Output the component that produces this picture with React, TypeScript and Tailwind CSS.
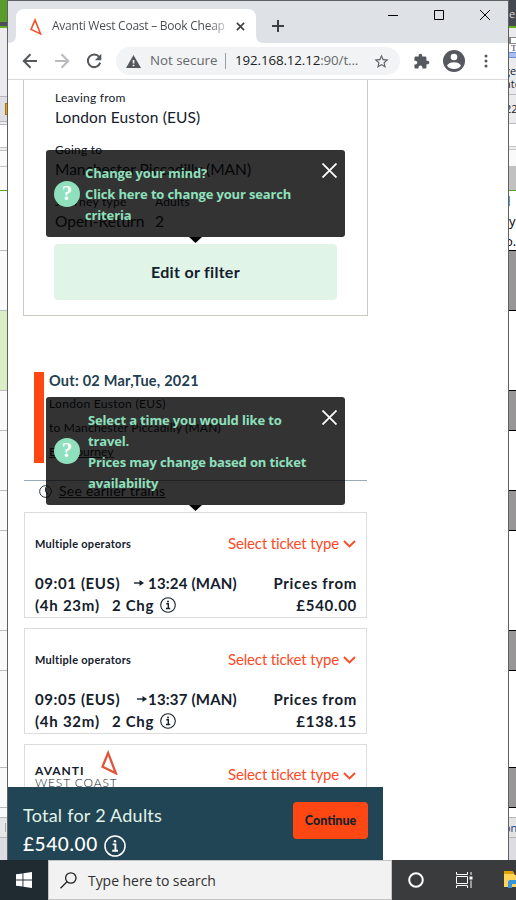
import React from "react";

type Band = { cls: string; text?: React.ReactNode };

const leftBands: Band[] = [
  { cls: "h-[22px] bg-[#599c2b]" },
  { cls: "h-[4px] bg-[#4b4f5a]" },
  { cls: "h-[2px] bg-[#63ad1f]" },
  { cls: "h-[68px] bg-[#ebebee]" },
  { cls: "h-[26px] border-y border-[#b9b9be] bg-[#dedee4] pt-[6px] pl-[5px]", text: <div className="h-[12px] w-[4px] border border-[#a87408] bg-[#eda412]" /> },
  { cls: "h-[3px] border-b border-[#b9b9be] bg-[#ebebee]" },
  { cls: "h-[22px] bg-white" },
  { cls: "h-[4px] border-y border-[#c4c4c4] bg-[#eeeeee]" },
  { cls: "h-[16px] border-b border-[#c4c4c4] bg-[#fafafa]" },
  { cls: "h-[24px] border-b border-[#55a520] bg-[#fafafa]" },
  { cls: "h-[60px] border-b border-[#bdbdbd] bg-[#fafafa]" },
  { cls: "h-[60px] border-b border-[#bdbdbd] bg-[#fafafa]" },
  { cls: "h-[80px] border-b border-[#bdbdbd] bg-[#d9eec4]" },
  { cls: "h-[40px] border-b border-[#bdbdbd] bg-[#fafafa]" },
  { cls: "h-[60px] border-b border-[#bdbdbd] bg-[#fafafa]" },
  { cls: "h-[40px] border-b border-[#bdbdbd] bg-[#fafafa]" },
  { cls: "h-[100px] border-b border-[#bdbdbd] bg-[#fafafa]" },
  { cls: "h-[40px] border-b border-[#bdbdbd] bg-[#fafafa]" },
  { cls: "h-[97px] border-b border-[#bdbdbd] bg-[#fafafa]" },
  { cls: "h-[40px] border-b border-[#bdbdbd] bg-[#fafafa]" },
  { cls: "h-[10px] border-b border-[#bdbdbd] bg-[#fafafa]" },
  { cls: "h-[20px] border-b border-[#b5b5b5] bg-[#e6e6e6] pt-[5px] pl-[5px]", text: <div className="h-[9px] w-px bg-[#aaaaaa]" /> },
  { cls: "h-[22px] bg-[#dcdce2]" },
];

const rightBands: Band[] = [
  { cls: "h-[26px] bg-[#454951] text-[#d5d5d5] text-[11px] leading-[28px]", text: "e" },
  { cls: "h-[2px] bg-[#63b01f]" },
  { cls: "h-[10px] border-b border-[#888888] bg-[#ebebee]" },
  { cls: "h-[6px] border-b border-l-2 border-[#888888] bg-white" },
  { cls: "h-[8px] bg-white font-['Liberation_Serif',serif] text-[9px] leading-[9px] text-[#333355] pl-[2px]", text: "T" },
  { cls: "h-[6px] border-y border-[#6f8ed6] bg-[#a8bdf0]" },
  { cls: "h-[37px] border-b border-[#b9b9be] bg-[#ebebee] pt-[6px] text-[11px] leading-[13px] text-[#222222]", text: <div className="-ml-[5px]"><div>ge</div><div>nte</div></div> },
  { cls: "h-[29px] border-b border-[#b9b9be] bg-[#ebebee] text-[11px] leading-[28px] text-[#222222]", text: <div className="-ml-[4px]">22</div> },
  { cls: "h-[22px] bg-white" },
  { cls: "h-[4px] border-y border-[#c4c4c4] bg-[#eeeeee]" },
  { cls: "h-[16px] bg-[#fafafa]" },
  { cls: "h-[25px] border-b border-[#55a520] bg-[#c1c1c1]" },
  { cls: "h-[20px] bg-white pt-[5px]", text: <div className="h-[10px] w-px bg-[#5798d6]" /> },
  { cls: "h-[39px] bg-white text-[13px] leading-[20px] text-black", text: <div><div>y</div><div className="-ml-[4px]">o.</div></div> },
  { cls: "h-[61px] border-y border-black bg-[#989696]" },
  { cls: "h-[79px] bg-white" },
  { cls: "h-[41px] border-y border-black bg-[#989696]" },
  { cls: "h-[59px] bg-white" },
  { cls: "h-[41px] border-y border-black bg-[#989696]" },
  { cls: "h-[99px] bg-white" },
  { cls: "h-[41px] border-y border-black bg-[#989696]" },
  { cls: "h-[96px] bg-white" },
  { cls: "h-[41px] border-y border-black bg-[#989696]" },
  { cls: "h-[9px] bg-white" },
  { cls: "h-[21px] border-y border-[#b5b5b5] bg-[#e3e3e3] text-[11px] leading-[20px] text-[#24407c]", text: <div className="-ml-[5px]">on</div> },
  { cls: "h-[22px] bg-[#dcdce2]" },
];

function Strip({ bands }: { bands: Band[] }) {
  return (
    <div className="h-[860px] w-[7px] shrink-0 overflow-hidden">
      {bands.map((b, i) => (
        <div key={i} className={`overflow-hidden whitespace-nowrap ${b.cls}`}>
          {b.text}
        </div>
      ))}
    </div>
  );
}

function AvantiMark({ className, color }: { className: string; color: string }) {
  return (
    <svg viewBox="0 0 16 25" className={className} fill="none" stroke={color} strokeWidth="2.2" preserveAspectRatio="none">
      <path d="M6.7 3 L14 23.3 L1.4 16.7 Z" />
    </svg>
  );
}

function TabStrip() {
  return (
    <div className="flex h-[42px] bg-[#dee1e6] pt-2">
      <div className="relative ml-2 flex h-[34px] w-[240px] items-center rounded-t-lg bg-white">
        <svg viewBox="0 0 256 8" className="absolute -left-2 bottom-0 h-2 w-[256px] fill-white">
          <path d="M0 8 Q8 8 8 0 V8Z M256 8 Q248 8 248 0 V8Z" />
        </svg>
        <AvantiMark color="#f1512a" className="ml-[14px] h-[17px] w-[12px]" />
        <div className="ml-[10px] w-[173px] overflow-hidden whitespace-nowrap bg-gradient-to-r from-[#45484c] from-90% to-[#c8c8c8] bg-clip-text text-[12px] tracking-[-0.24px] text-transparent">
          Avanti West Coast – Book Cheap
        </div>
        <svg viewBox="0 0 10 10" className="ml-[11px] h-[9px] w-[9px]" stroke="#3c4043" strokeWidth="1.8">
          <path d="M1 1L9 9M9 1L1 9" />
        </svg>
      </div>
      <svg viewBox="0 0 12 12" className="mt-[11px] ml-4 h-3 w-3" stroke="#3c4043" strokeWidth="2">
        <path d="M6 0V12M0 6H12" />
      </svg>
      <div className="mt-px ml-[104px] flex h-[10px] gap-[36px]">
        <svg viewBox="0 0 10 10" className="h-[10px] w-[10px]"><path d="M0 5.5H10" stroke="#000" /></svg>
        <svg viewBox="0 0 10 10" className="h-[10px] w-[10px]"><path d="M.5 .5H9.5V9.5H.5Z" stroke="#000" fill="none" /></svg>
        <svg viewBox="0 0 10 10" className="h-[10px] w-[10px]"><path d="M0 0L10 10M10 0L0 10" stroke="#000" /></svg>
      </div>
    </div>
  );
}

function Toolbar() {
  return (
    <div className="flex h-[37px] items-center border-b border-[#d9dadc] bg-white pl-[14px]">
      <svg viewBox="0 0 16 16" className="h-4 w-4" fill="none" stroke="#55585d" strokeWidth="2"><path d="M15 8H2M8.5 1.3L1.8 8l6.700 6.700" /></svg>
      <svg viewBox="0 0 16 16" className="ml-4 h-4 w-4" fill="none" stroke="#b9babd" strokeWidth="2"><path d="M1 8H14M7.500 1.300L14.200 8l-6.700 6.700" /></svg>
      <svg viewBox="0 0 16 16" className="ml-4 h-4 w-4"><path d="M13.200 4A6.300 6.300 0 1 0 14.200 9.600" fill="none" stroke="#55585d" strokeWidth="2" /><path d="M15.300 .7V7.200H8.800Z" fill="#55585d" /></svg>
      <div className="ml-[14px] flex h-7 w-[284px] items-center rounded-full bg-[#f1f3f4] pl-[10px]">
        <svg viewBox="0 0 15 13" className="h-[13px] w-[15px]"><path d="M7.500 0L15 13H0Z" fill="#54575b" /><path d="M6.700 5h1.700v3.500H6.700ZM6.700 9.700h1.700v1.600H6.700Z" fill="#f1f3f4" /></svg>
        <span className="ml-[9px] w-[67px] whitespace-nowrap text-[13.300px] text-[#65686c]">Not secure</span>
        <div className="ml-[8px] h-4 w-px bg-[#9a9da1]" />
        <span className="ml-[9px] w-[125px] whitespace-nowrap text-[13.300px] tracking-[-0.1px] text-[#202124]">192.168.12.12<span className="text-[#65686c]">:90/t...</span></span>
        <svg viewBox="0 0 24 24" className="ml-[13px] h-[17px] w-[17px]"><path fill="#5f6368" d="M22 9.240l-7.190-.620L12 2 9.190 8.630 2 9.240l5.460 4.730L5.820 21 12 17.270 18.180 21l-1.630-7.030L22 9.240zM12 15.400l-3.760 2.270 1-4.280-3.320-2.880 4.380-.380L12 6.100l1.710 4.040 4.380.380-3.320 2.880 1 4.280L12 15.400z" /></svg>
      </div>
      <svg viewBox="0 0 24 24" className="ml-[13px] h-[17px] w-[17px]" fill="#55585d"><path d="M20.500 11H19V7c0-1.100-.9-2-2-2h-4V3.500C13 2.120 11.880 1 10.500 1S8 2.120 8 3.500V5H4c-1.100 0-1.990.9-1.990 2v3.800H3.500c1.490 0 2.700 1.210 2.700 2.700s-1.210 2.700-2.700 2.700H2V20c0 1.100.9 2 2 2h3.800v-1.500c0-1.490 1.210-2.700 2.700-2.700s2.700 1.210 2.700 2.700V22H17c1.100 0 2-.9 2-2v-4h1.500c1.380 0 2.500-1.120 2.500-2.500S21.880 11 20.500 11z" /></svg>
      <svg viewBox="0 0 22 22" className="ml-[13px] h-[22px] w-[22px]"><circle cx="11" cy="11" r="11" fill="#55585d" /><circle cx="11" cy="7" r="3.300" fill="#fff" /><path d="M4 15.700Q6 12.300 11 12.300T18 15.700Q15.500 19 11 19T4 15.700Z" fill="#fff" /></svg>
      <svg viewBox="0 0 4 14" className="ml-[19px] h-[14px] w-1" fill="#55585d"><circle cx="2" cy="2" r="1.500" /><circle cx="2" cy="7" r="1.500" /><circle cx="2" cy="12" r="1.500" /></svg>
    </div>
  );
}

function Tooltip({ className, textClass, children }: { className: string; textClass: string; children: React.ReactNode }) {
  return (
    <div className={`absolute left-[38px] flex w-[299px] items-center rounded-[3px] bg-black/80 pl-2 ${className}`}>
      <div className="flex h-[26px] w-[26px] shrink-0 items-center justify-center rounded-full bg-[#8fe0bd] font-['Liberation_Serif',serif] text-[21px] font-bold text-white">?</div>
      <div className={`w-[224px] pt-[2px] whitespace-nowrap font-['Open_Sans','Noto_Sans',sans-serif] text-[13px] leading-[21px] font-bold tracking-[-0.15px] text-[#8fe0bd] ${textClass}`}>{children}</div>
      <svg viewBox="0 0 15 15" className="absolute top-[13px] right-2 h-[15px] w-[15px]" stroke="#fff" strokeWidth="1.800"><path d="M.5 .5L14.500 14.500M14.500 .5L.5 14.500" /></svg>
      <svg viewBox="0 0 13 6" className="absolute top-full left-[143px] h-[6px] w-[13px]"><path d="M0 0H13L6.500 6Z" /></svg>
    </div>
  );
}

function InfoIcon({ className }: { className: string }) {
  return (
    <svg viewBox="0 0 16 16" className={className} fill="none" stroke="currentColor">
      <circle cx="8" cy="8" r="7.300" strokeWidth="1.100" />
      <path d="M6.300 6.800H8.300V11.500M6 11.500H10.200" strokeWidth="1.400" />
      <circle cx="8" cy="4.500" r=".95" fill="currentColor" stroke="none" />
    </svg>
  );
}

function TicketLink() {
  return (
    <div className="flex items-center text-[15px] leading-5 text-[#fc4a26]">
      <span className="-mt-px w-[111px] whitespace-nowrap tracking-[-0.15px]">Select ticket type</span>
      <svg viewBox="0 0 13 8" className="mt-[2px] ml-1 h-2 w-[13px]" fill="none" stroke="currentColor" strokeWidth="1.900"><path d="M1 1L6.500 6.500L12 1" /></svg>
    </div>
  );
}

function TripCard({ depart, arrive, departWidth, duration, price }: { depart: string; arrive: string; departWidth: string; duration: string; price: string }) {
  return (
    <div className="h-[106px] w-[343px] border border-[#dcdcdc] pr-[10px] pl-[10px] text-[#14202b]">
      <div className="mt-5 flex h-5 items-center justify-between">
        <span className="mt-[2px] text-[11px] font-bold tracking-[0.29px]">Multiple operators</span>
        <TicketLink />
      </div>
      <div className="mt-[19px] flex justify-between text-[15px] leading-[22px] font-bold whitespace-nowrap">
        <div>
          <div className="flex items-center">
            <span className={`tracking-[0.6px] ${departWidth}`}>{depart}</span>
            <svg viewBox="0 0 10 8" className="h-2 w-[10px]"><path d="M0 4H7" stroke="#14202b" strokeWidth="1.400" /><path d="M5.500 1L10 4L5.500 7Z" fill="#14202b" /></svg>
            <span className="ml-auto w-[88px] tracking-[0.2px]">{arrive}</span>
          </div>
          <div className="flex w-[201px] items-center">
            <span className="w-[77px] tracking-[0.75px]">{duration}</span>
            <span className="w-[43px] tracking-[0.7px]">2 Chg</span>
            <InfoIcon className="ml-[5px] h-4 w-4" />
          </div>
        </div>
        <div className="-mr-px text-right tracking-[0.7px]"><div>Prices from</div><div>{price}</div></div>
      </div>
    </div>
  );
}

function SearchSummary() {
  return (
    <section className="ml-[15px] h-[236px] w-[345px] border-x border-b border-[#cfcbc2] pl-[30px] text-[#14202b]">
      <div className="pl-px">
        <div className="pt-2 text-[12px] leading-5 tracking-[0.22px]">Leaving from</div>
        <div className="-mt-px h-[21px] text-[15.500px] leading-5 tracking-[0.13px]">London Euston (EUS)</div>
        <div className="pt-3 text-[12px] leading-5 tracking-[0.22px]">Going to</div>
        <div className="-mt-px h-[21px] text-[15.500px] leading-5">Manchester Piccadilly (MAN)</div>
        <div className="flex pt-3">
          <div className="w-[100px]">
            <div className="text-[12px] leading-5 tracking-[0.3px]">Journey type</div>
            <div className="-mt-px h-[21px] text-[15.500px] leading-5">Open-Return</div>
          </div>
          <div>
            <div className="text-[12px] leading-5 tracking-[0.2px]">Adults</div>
            <div className="-mt-px h-[21px] text-[15.500px] leading-5">2</div>
          </div>
        </div>
      </div>
      <button className="mt-3 flex h-14 w-[283px] items-center justify-center rounded-[4px] bg-[#e1f4e8] text-[16px] font-bold tracking-[0.3px]">Edit or filter</button>
    </section>
  );
}

function Page() {
  return (
    <main className="relative h-[707px] overflow-hidden bg-white font-['Lato','Noto_Sans',sans-serif]">
      <SearchSummary />
      <section className="mt-[56px] ml-[26px] h-[91px] border-l-[10px] border-[#ff4713] pl-[5px] text-[12px] text-[#14202b]">
        <h2 className="text-[14.500px] leading-[18px] font-bold tracking-[0.24px] text-[#1f4050]">Out: 02 Mar,Tue, 2021</h2>
        <p className="mt-[5px] leading-[18px] tracking-[0.33px]">London Euston (EUS)</p>
        <p className="mt-[6px] leading-[18px] tracking-[0.2px]">to Manchester Piccadilly (MAN)</p>
        <p className="mt-[6px] leading-[18px] tracking-[0.1px] underline">Edit journey</p>
      </section>
      <div className="mt-[17px] ml-4 h-px w-[343px] bg-[#9aabb6]" />
      <div className="ml-[31px] flex h-[31px] items-center pb-[11px] text-[#14202b]">
        <svg viewBox="0 0 14 14" className="h-[13px] w-[13px]" fill="none" stroke="currentColor"><circle cx="7" cy="7" r="6.300" /><path d="M7 2.500V7L9.500 10" /></svg>
        <span className="ml-[7px] text-[14px] leading-5 tracking-[0.24px] underline">See earlier trains</span>
      </div>
      <div className="ml-4 flex flex-col gap-[10px]">
        <TripCard depart="09:01 (EUS)" arrive="13:24 (MAN)" departWidth="w-[99px]" duration="(4h 23m)" price="£540.00" />
        <TripCard depart="09:05 (EUS)" arrive="13:37 (MAN)" departWidth="w-[102px]" duration="(4h 32m)" price="£138.15" />
        <div className="flex h-[106px] w-[343px] justify-between border border-[#dcdcdc] px-[10px]">
          <div className="flex">
            <div className="mt-[20px] text-[12px] leading-[12px] text-[#14202b]">
              <div className="w-[66px] font-bold tracking-[1px]">AVANTI</div>
              <div className="w-[66px] whitespace-nowrap font-light tracking-[0.850px]">WEST COAST</div>
            </div>
            <AvantiMark color="#e1553a" className="mt-[5px] h-[25px] w-[17px]" />
          </div>
          <div className="mt-5"><TicketLink /></div>
        </div>
      </div>
      <Tooltip className="top-[70px] h-[87px]" textClass="ml-[5px]">Change your mind?<br />Click here to change your search<br />criteria</Tooltip>
      <Tooltip className="top-[317px] h-[108px]" textClass="ml-[8px]">Select a time you would like to<br />travel.<br />Prices may change based on ticket<br />availability</Tooltip>
    </main>
  );
}

function TotalBar() {
  return (
    <div className="flex h-[73px] w-[375px] justify-between bg-[#214554] pr-[15px] pl-[15px] font-['Lato','Noto_Sans',sans-serif]">
      <div className="pt-[14px] text-[18px] leading-7">
        <div className="tracking-[0.24px] text-[#e1f4e8]">Total for 2 Adults</div>
        <div className="mt-px flex items-center text-[19px] font-medium text-white">
          <span className="w-[81px] tracking-[0.6px]">£540.00</span>
          <InfoIcon className="mt-[3px] h-[22px] w-[22px]" />
        </div>
      </div>
      <button className="mt-[15px] h-[37px] w-[75px] rounded-[4px] bg-[#ff4713] pt-[2px] text-[12.500px] font-black text-[#14202b]">Continue</button>
    </div>
  );
}

function Taskbar() {
  return (
    <div className="flex h-10 bg-[#3a3b3c]">
      <div className="flex w-12 items-center justify-center bg-[#202a31]">
        <svg viewBox="0 0 16 16" className="h-4 w-4" fill="#fff"><path d="M0 2.300L6.500 1.400V7.500H0ZM7.400 1.200L16 0V7.500H7.400ZM0 8.400H6.500V14.600L0 13.700ZM7.400 8.400H16V16L7.400 14.800Z" /></svg>
      </div>
      <div className="flex w-[344px] items-center border border-[#c3c3c3] bg-[#f2f2f2] pl-[11px]">
        <svg viewBox="0 0 17 17" className="h-[17px] w-[17px]" fill="none" stroke="#222" strokeWidth="1.300"><circle cx="10.800" cy="6" r="5.200" /><path d="M7 9.700L.5 16.300" /></svg>
        <span className="ml-[11px] text-[14px] tracking-[-0.05px] text-[#303030]">Type here to search</span>
      </div>
      <div className="flex flex-1 items-center pl-4">
        <svg viewBox="0 0 16 16" className="h-4 w-4" fill="none" stroke="#fff" strokeWidth="2"><circle cx="8" cy="8" r="6.800" /></svg>
        <svg viewBox="0 0 17 16" className="ml-8 h-4 w-[17px]" fill="none" stroke="#fff"><path d="M.5 0V2.500H11.500V0M.5 4.500H11.500V11.500H.5ZM.5 16V13.500H11.500V16M15 0V3M15 8.500V16" /><path d="M13.500 4.500H16.500V7.500H13.500Z" fill="#fff" stroke="none" /></svg>
        <svg viewBox="0 0 12 18" className="ml-[31px] h-[18px] w-3 shrink-0"><path d="M0 1H9L11 4H12V16H0Z" fill="#ffd35c" /><path d="M0 0H9L10 3H0Z" fill="#e2a100" /><path d="M4 17V11Q4 9 6 9H12V13H8V17Z" fill="#3795dd" /></svg>
      </div>
    </div>
  );
}

export default function App() {
  return (
    <div className="h-[900px] w-[516px] overflow-hidden bg-white font-['Open_Sans','Noto_Sans',sans-serif]">
      <div className="flex h-[860px]">
        <Strip bands={leftBands} />
        <div className="h-[860px] w-[502px] shrink-0 overflow-hidden border-x border-t border-[#5f6062] bg-white">
          <TabStrip />
          <Toolbar />
          <Page />
          <TotalBar />
        </div>
        <Strip bands={rightBands} />
      </div>
      <Taskbar />
    </div>
  );
}
